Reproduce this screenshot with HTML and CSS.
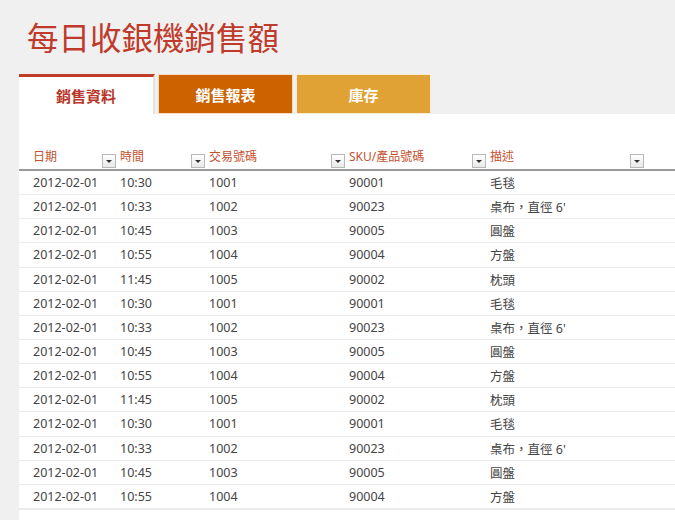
FILE: index.html
```html
<!DOCTYPE html>
<html lang="zh-Hant">
<head>
<meta charset="utf-8">
<title>每日收銀機銷售額</title>
<link rel="stylesheet" href="styles.css">
</head>
<body>
<h1 class="title">每日收銀機銷售額</h1>
<nav class="tabs">
  <div class="tab tab-active">銷售資料</div>
  <div class="tab tab-report">銷售報表</div>
  <div class="tab tab-stock">庫存</div>
</nav>
<main class="panel">
  <div class="table">
    <div class="row head">
      <div class="cell c1"><span class="label">日期</span><span class="dd"></span></div>
      <div class="cell c2"><span class="label">時間</span><span class="dd"></span></div>
      <div class="cell c3"><span class="label">交易號碼</span><span class="dd"></span></div>
      <div class="cell c4"><span class="label">SKU/產品號碼</span><span class="dd"></span></div>
      <div class="cell c5"><span class="label">描述</span><span class="dd"></span></div>
    </div>
    <div class="row"><div class="cell c1">2012-02-01</div><div class="cell c2">10:30</div><div class="cell c3">1001</div><div class="cell c4">90001</div><div class="cell c5">毛毯</div></div>
    <div class="row"><div class="cell c1">2012-02-01</div><div class="cell c2">10:33</div><div class="cell c3">1002</div><div class="cell c4">90023</div><div class="cell c5">桌布，直徑 6'</div></div>
    <div class="row"><div class="cell c1">2012-02-01</div><div class="cell c2">10:45</div><div class="cell c3">1003</div><div class="cell c4">90005</div><div class="cell c5">圓盤</div></div>
    <div class="row"><div class="cell c1">2012-02-01</div><div class="cell c2">10:55</div><div class="cell c3">1004</div><div class="cell c4">90004</div><div class="cell c5">方盤</div></div>
    <div class="row"><div class="cell c1">2012-02-01</div><div class="cell c2">11:45</div><div class="cell c3">1005</div><div class="cell c4">90002</div><div class="cell c5">枕頭</div></div>
    <div class="row"><div class="cell c1">2012-02-01</div><div class="cell c2">10:30</div><div class="cell c3">1001</div><div class="cell c4">90001</div><div class="cell c5">毛毯</div></div>
    <div class="row"><div class="cell c1">2012-02-01</div><div class="cell c2">10:33</div><div class="cell c3">1002</div><div class="cell c4">90023</div><div class="cell c5">桌布，直徑 6'</div></div>
    <div class="row"><div class="cell c1">2012-02-01</div><div class="cell c2">10:45</div><div class="cell c3">1003</div><div class="cell c4">90005</div><div class="cell c5">圓盤</div></div>
    <div class="row"><div class="cell c1">2012-02-01</div><div class="cell c2">10:55</div><div class="cell c3">1004</div><div class="cell c4">90004</div><div class="cell c5">方盤</div></div>
    <div class="row"><div class="cell c1">2012-02-01</div><div class="cell c2">11:45</div><div class="cell c3">1005</div><div class="cell c4">90002</div><div class="cell c5">枕頭</div></div>
    <div class="row"><div class="cell c1">2012-02-01</div><div class="cell c2">10:30</div><div class="cell c3">1001</div><div class="cell c4">90001</div><div class="cell c5">毛毯</div></div>
    <div class="row"><div class="cell c1">2012-02-01</div><div class="cell c2">10:33</div><div class="cell c3">1002</div><div class="cell c4">90023</div><div class="cell c5">桌布，直徑 6'</div></div>
    <div class="row"><div class="cell c1">2012-02-01</div><div class="cell c2">10:45</div><div class="cell c3">1003</div><div class="cell c4">90005</div><div class="cell c5">圓盤</div></div>
    <div class="row last"><div class="cell c1">2012-02-01</div><div class="cell c2">10:55</div><div class="cell c3">1004</div><div class="cell c4">90004</div><div class="cell c5">方盤</div></div>
  </div>
</main>
</body>
</html>
```

FILE: styles.css
```css
html, body {
  margin: 0;
  padding: 0;
}
body {
  background: #f0f0f0;
  font-family: "Noto Sans", "Noto Sans CJK TC", sans-serif;
  width: 675px;
  height: 520px;
  overflow: hidden;
  display: flex;
  flex-direction: column;
}
.title {
  margin: 0;
  padding: 14px 0 0 27px;
  height: 60px;
  box-sizing: border-box;
  font-family: "Noto Sans CJK TC", sans-serif;
  font-size: 31.5px;
  font-weight: 400;
  line-height: 44px;
  color: #bf3a2b;
  letter-spacing: 0;
}
.tabs {
  display: flex;
  padding: 14px 0 0 19px;
  height: 54px;
  box-sizing: border-box;
}
.tab {
  width: 135px;
  height: 40px;
  box-sizing: border-box;
  display: flex;
  align-items: center;
  justify-content: center;
  font-family: "Noto Sans CJK TC", sans-serif;
  font-size: 15px;
  font-weight: 700;
  color: #ffffff;
  margin-right: 3px;
}
.tab-active {
  width: 136px;
  background: #ffffff;
  color: #b8372a;
  border-top: 3px solid #c13c26;
  border-right: 2px solid #e2e2e2;
  padding-bottom: 0;
  margin-right: 3px;
}
.tab-report {
  background: #cc6200;
  border: 1px solid #f6dcc6;
}
.tab-stock {
  background: #e0a234;
  border: 1px solid #f8ecd2;
}
.panel {
  flex: 1;
  margin-left: 19px;
  background: #ffffff;
  padding-top: 34px;
}
.table {
  display: flex;
  flex-direction: column;
}
.row {
  display: flex;
  padding-left: 11px;
  height: 24.15px;
  box-sizing: border-box;
  border-bottom: 1px solid #ececec;
  align-items: center;
  font-size: 12.5px;
  color: #444444;
}
.row.last {
  border-bottom: 2px solid #ebebeb;
  height: 25.15px;
}
.row.head {
  height: 23px;
  border-bottom: 2px solid #9a9a9a;
  align-items: flex-end;
}
.cell {
  box-sizing: border-box;
  padding-left: 3px;
  white-space: nowrap;
  font-family: "Noto Sans", "Noto Sans CJK TC", sans-serif;
}
.c1 { width: 87px; }
.c2 { width: 89px; }
.c3 { width: 140px; }
.c4 { width: 141px; }
.c5 { width: 158px; }
.head .cell {
  display: flex;
  align-items: flex-end;
  justify-content: space-between;
  padding-right: 1px;
  height: 100%;
}
.label {
  color: #c4512f;
  font-size: 12px;
  line-height: 16px;
  margin-bottom: 4px;
}
.dd {
  width: 14px;
  height: 14px;
  box-sizing: border-box;
  border: 1px solid #b8b8b8;
  background: linear-gradient(#ffffff, #e9e9e9);
  margin-bottom: 1px;
  position: relative;
  flex: none;
}
.dd::after {
  content: "";
  position: absolute;
  left: 3px;
  top: 5px;
  border-left: 3px solid transparent;
  border-right: 3px solid transparent;
  border-top: 3px solid #333333;
}
```
